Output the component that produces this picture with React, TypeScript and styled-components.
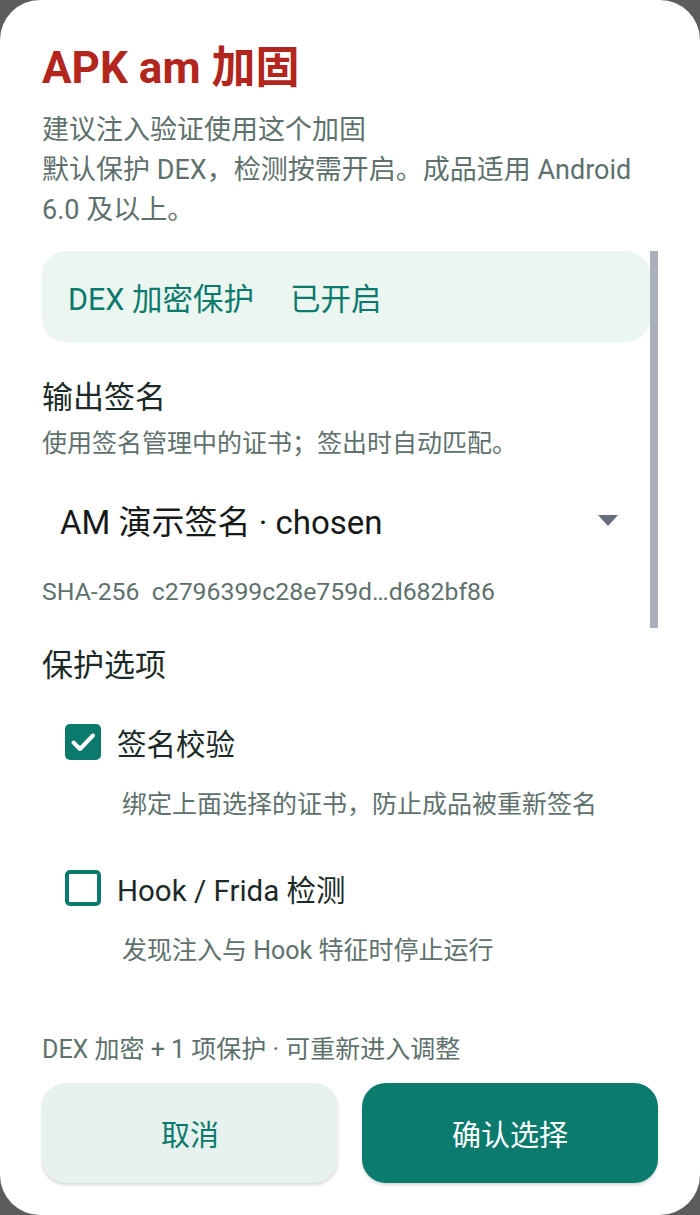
import React from "react";
import styled, { createGlobalStyle } from "styled-components";

const GlobalStyle = createGlobalStyle`
  html, body {
    margin: 0;
    padding: 0;
    background: #5c5c5c;
  }
  body {
    font-family: Roboto, "Noto Sans CJK SC", sans-serif;
  }
  * { box-sizing: border-box; }
`;

const Dialog = styled.div`
  width: 700px;
  height: 1215px;
  background: #ffffff;
  border-radius: 40px;
  padding: 40px 42px 0;
  display: flex;
  flex-direction: column;
  overflow: hidden;
`;

const Title = styled.h1`
  margin: 0;
  font-size: 44px;
  line-height: 56px;
  font-weight: 700;
  color: #b3261e;
`;

const Subtitle = styled.p`
  margin: 14px 0 0;
  font-size: 27px;
  line-height: 40px;
  color: #5e716d;
`;

const ScrollArea = styled.div`
  position: relative;
  margin-top: 21px;
  display: flex;
  flex-direction: column;
`;

const Thumb = styled.div`
  position: absolute;
  top: 0;
  right: 0;
  width: 8px;
  height: 377px;
  background: #aab0bb;
`;

const StatusCard = styled.div`
  height: 91px;
  margin-right: 8px;
  border-radius: 24px;
  background: #ebf6f1;
  padding: 0 26px;
  display: flex;
  align-items: center;
  gap: 36px;
  font-size: 30.5px;
  color: #0b7a6d;
`;

const SectionTitle = styled.h2<{ $top: number }>`
  margin: ${(p) => p.$top}px 0 0;
  font-size: 31px;
  line-height: 40px;
  font-weight: 400;
  color: #1b2a27;
`;

const Desc = styled.p<{ $top: number; $indent?: number }>`
  margin: ${(p) => p.$top}px 0 0;
  padding-left: ${(p) => p.$indent ?? 0}px;
  font-size: 25px;
  line-height: 32px;
  color: #5e716d;
`;

const Dropdown = styled.div`
  margin-top: 24px;
  height: 72px;
  padding: 0 40px 0 18px;
  display: flex;
  align-items: center;
  justify-content: space-between;
  font-size: 33px;
  color: #161a19;
`;

const Hash = styled.div`
  margin-top: 21px;
  font-size: 24.8px;
  line-height: 30px;
  color: #5e716d;
  white-space: pre;
`;

const OptionRow = styled.label<{ $top: number }>`
  margin-top: ${(p) => p.$top}px;
  height: 56px;
  padding-left: 23px;
  display: flex;
  align-items: center;
  gap: 16px;
  font-size: 29.5px;
  color: #1b2a27;
`;

const Box = styled.span<{ $checked: boolean }>`
  width: 36px;
  height: 36px;
  border-radius: 5px;
  flex: none;
  display: flex;
  align-items: center;
  justify-content: center;
  background: ${(p) => (p.$checked ? "#0b7a6d" : "#ffffff")};
  border: ${(p) => (p.$checked ? "none" : "4px solid #0b7a6d")};
`;

const Footer = styled.div`
  margin-top: 67px;
  font-size: 25px;
  line-height: 32px;
  color: #5e716d;
`;

const Buttons = styled.div`
  margin-top: 17px;
  display: grid;
  grid-template-columns: 1fr 1fr;
  gap: 24px;
`;

const Button = styled.button<{ $primary?: boolean }>`
  height: 100px;
  border: none;
  border-radius: 24px;
  font-family: inherit;
  font-size: 29px;
  background: ${(p) => (p.$primary ? "#0b7b6e" : "#e7f2ef")};
  color: ${(p) => (p.$primary ? "#ffffff" : "#0b7a6d")};
  box-shadow: 0 2px 3px rgba(0, 0, 0, 0.16);
`;

function Checkbox({ checked }: { checked: boolean }) {
  return (
    <Box $checked={checked}>
      {checked && (
        <svg width="36" height="36" viewBox="0 0 36 36">
          <path
            d="M8.5 18.5 L15 25 L28 11.5"
            fill="none"
            stroke="#ffffff"
            strokeWidth="4"
            strokeLinecap="round"
            strokeLinejoin="round"
          />
        </svg>
      )}
    </Box>
  );
}

export default function App() {
  return (
    <>
      <GlobalStyle />
      <Dialog>
        <Title>APK am 加固</Title>
        <Subtitle>
          建议注入验证使用这个加固
          <br />
          默认保护 DEX，检测按需开启。成品适用 Android 6.0 及以上。
        </Subtitle>
        <ScrollArea>
          <Thumb />
          <StatusCard>
            <span>DEX 加密保护</span>
            <span>已开启</span>
          </StatusCard>
          <SectionTitle $top={36}>输出签名</SectionTitle>
          <Desc $top={10}>使用签名管理中的证书；签出时自动匹配。</Desc>
          <Dropdown>
            <span>AM 演示签名 · chosen</span>
            <svg width="20" height="11" viewBox="0 0 20 11">
              <path d="M0 0 H20 L10 11 Z" fill="#646b7a" />
            </svg>
          </Dropdown>
          <Hash>{"SHA-256  c2796399c28e759d…d682bf86"}</Hash>
          <SectionTitle $top={39}>保护选项</SectionTitle>
          <OptionRow $top={28}>
            <Checkbox checked />
            <span>签名校验</span>
          </OptionRow>
          <Desc $top={19} $indent={80}>
            绑定上面选择的证书，防止成品被重新签名
          </Desc>
          <OptionRow $top={39}>
            <Checkbox checked={false} />
            <span>Hook / Frida 检测</span>
          </OptionRow>
          <Desc $top={19} $indent={80}>
            发现注入与 Hook 特征时停止运行
          </Desc>
        </ScrollArea>
        <Footer>DEX 加密 + 1 项保护 · 可重新进入调整</Footer>
        <Buttons>
          <Button>取消</Button>
          <Button $primary>确认选择</Button>
        </Buttons>
      </Dialog>
    </>
  );
}
